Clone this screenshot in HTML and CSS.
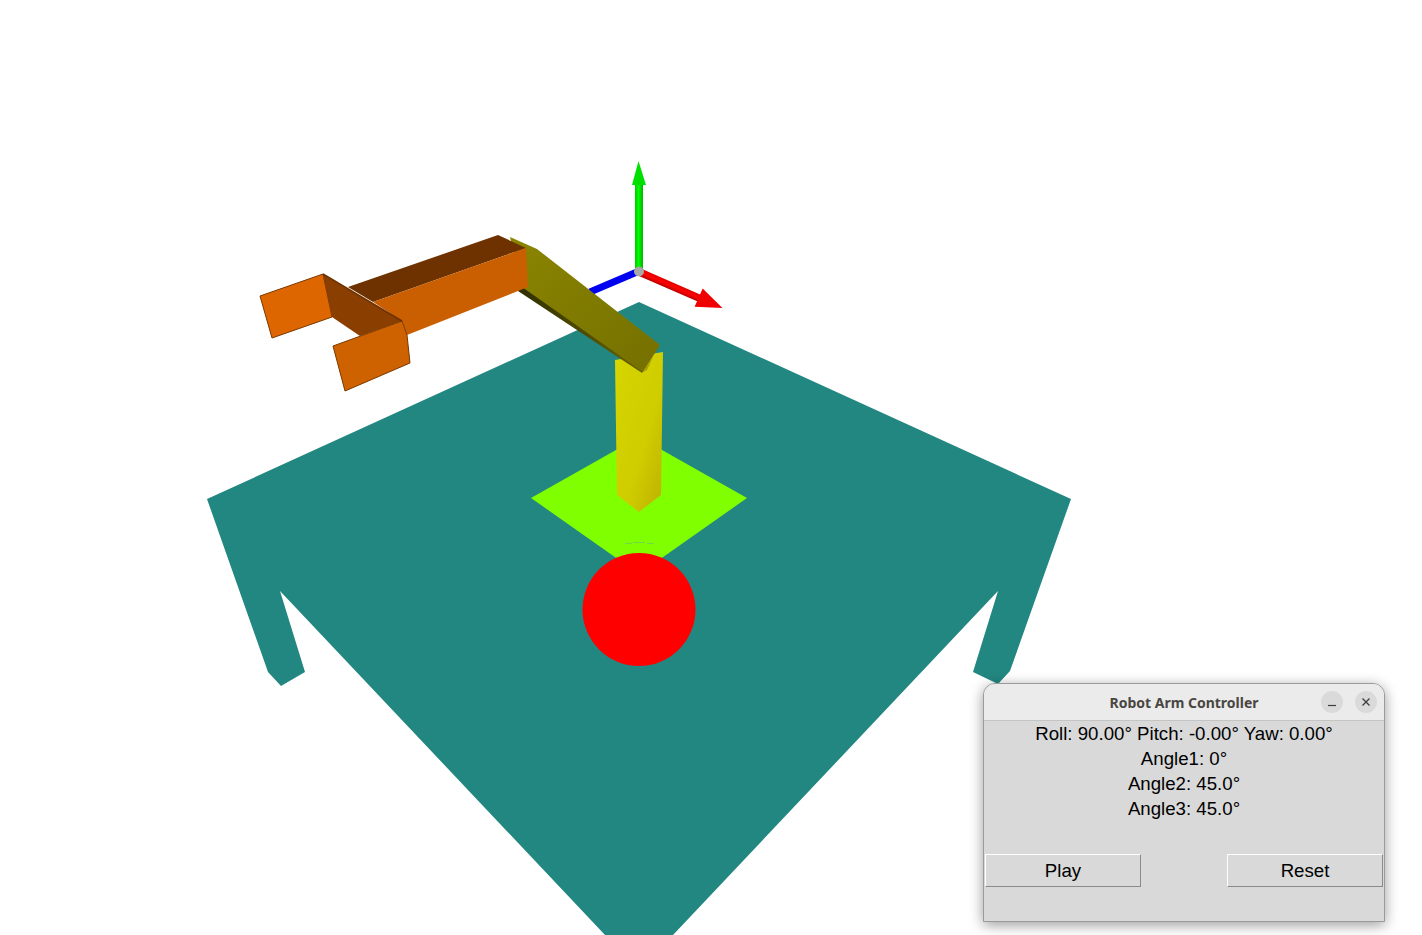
FILE: index.html
```html
<!DOCTYPE html>
<html lang="en">
<head>
  <meta charset="UTF-8" />
  <meta name="viewport" content="width=device-width, initial-scale=1.0"/>
  <title>Robot Arm Controller</title>
  <link rel="stylesheet" href="styles.css">
</head>
<body>
  <div class="scene">
    <svg class="scene-view" width="1422" height="935" viewBox="0 0 1422 935">
      <defs>
        <linearGradient id="pillar" x1="0" y1="0" x2="1" y2="1">
          <stop offset="0" stop-color="#d6d600"/>
          <stop offset="0.6" stop-color="#cfcc00"/>
          <stop offset="1" stop-color="#bdb000"/>
        </linearGradient>
        <linearGradient id="olive" x1="0" y1="0" x2="1" y2="1">
          <stop offset="0" stop-color="#8a8500"/>
          <stop offset="1" stop-color="#757000"/>
        </linearGradient>
        <linearGradient id="under" x1="0" y1="0" x2="1" y2="0">
          <stop offset="0" stop-color="#2e2e00"/>
          <stop offset="1" stop-color="#6a6500"/>
        </linearGradient>
        <linearGradient id="green-shaft" x1="0" y1="0" x2="1" y2="0">
          <stop offset="0" stop-color="#00c800"/>
          <stop offset="0.45" stop-color="#00ff00"/>
          <stop offset="1" stop-color="#00b000"/>
        </linearGradient>
        <linearGradient id="red-shaft" x1="0" y1="0" x2="0" y2="1">
          <stop offset="0" stop-color="#e00000"/>
          <stop offset="0.5" stop-color="#ff0000"/>
          <stop offset="1" stop-color="#b80000"/>
        </linearGradient>
      </defs>

      <!-- table -->
      <polygon fill="#238781" points="639,302 1071,499 1010,671 998,684 973,672 998,591 673,935 605,935 280,591 305,672 281,686 268,672 207,499"/>
      <!-- base plate -->
      <polygon fill="#80ff00" points="639,437 747,498 639,574 531,498"/>
      <path d="M625 543.500h7M633 542.500h12M647 543.500h7" stroke="#72d84a" fill="none"/>
      <circle cx="639" cy="609.500" r="56.500" fill="#ff0000"/>

      <!-- axes -->
      <line x1="590" y1="292" x2="637" y2="272" stroke="#0000f0" stroke-width="7"/>
      <g transform="rotate(23.600 640 272)">
        <rect x="640" y="268.500" width="66" height="7.500" fill="url(#red-shaft)"/>
        <polygon fill="#f00000" points="704,262 730,272 704,282"/>
      </g>
      <rect x="635" y="184" width="8" height="86" fill="url(#green-shaft)"/>
      <polygon fill="#00e000" points="638.500,161 646,185 632,185"/>
      <circle cx="639" cy="271.500" r="5" fill="#a8a8a8"/>

      <!-- pillar -->
      <polygon fill="url(#pillar)" points="615,360 663,352 661,495 639,512 617,495"/>

      <!-- middle link -->
      <polygon fill="url(#under)" points="516,285 522,283 645,368 642,373 518,291"/>
      <polygon fill="url(#olive)" points="510,237 537,249 660,345 643,372 522,287"/>
      <polygon fill="#a6a000" points="643,372 653,357 647,370"/>

      <!-- gripper link -->
      <polygon fill="#6e3200" points="498,235 526,248 373,302 348,287"/>
      <polygon fill="#c95f00" points="526,248 528,287 407,335 402,321 373,302"/>
      <polygon fill="#8a3f00" points="323,274 402,321 360,336 332,317"/>
      <polygon fill="#de6600" stroke="#7a3800" stroke-width="1" points="260,296 323,274 332,317 272,338"/>
      <polygon fill="#cf6200" stroke="#7a3800" stroke-width="1" points="333,346 402,321 407,335 410,363 345,391"/>
      <line x1="323" y1="274" x2="402" y2="321" stroke="#6e3200" stroke-width="1.500"/>
    </svg>

    <div class="window">
      <div class="titlebar">
        <span class="title">Robot Arm Controller</span>
        <div class="title-buttons">
          <span class="title-button">
            <svg width="10" height="10" viewBox="0 0 10 10"><path d="M1 8.500h8" stroke="#3d3d3d" stroke-width="1.200"/></svg>
          </span>
          <span class="title-button">
            <svg width="10" height="10" viewBox="0 0 10 10"><path d="M1.500 1.500l7 7M8.500 1.500l-7 7" stroke="#3d3d3d" stroke-width="1.300"/></svg>
          </span>
        </div>
      </div>
      <div class="panel">
        <div class="readout">Roll: 90.00° Pitch: -0.00° Yaw: 0.00°</div>
        <div class="readout">Angle1: 0°</div>
        <div class="readout">Angle2: 45.0°</div>
        <div class="readout">Angle3: 45.0°</div>
        <div class="button-row">
          <button>Play</button>
          <button>Reset</button>
        </div>
      </div>
    </div>
  </div>
</body>
</html>
```

FILE: styles.css
```css
* { box-sizing: border-box; }

html, body {
  margin: 0;
  height: 100%;
  background-color: #fff;
  overflow: hidden;
}

.scene {
  position: relative;
  width: 1422px;
  height: 935px;
}

.scene-view {
  display: block;
}

.window {
  position: absolute;
  left: 983px;
  top: 683px;
  width: 402px;
  height: 239px;
  display: flex;
  flex-direction: column;
  border: 1px solid #9b9b9b;
  border-radius: 12px 12px 0 0;
  background-color: #d9d9d9;
  box-shadow: 0 3px 14px rgba(0, 0, 0, 0.4);
}

.titlebar {
  position: relative;
  height: 37px;
  display: flex;
  align-items: center;
  justify-content: center;
  background-color: #ebebeb;
  border-bottom: 1px solid #c4c4c4;
  border-radius: 11px 11px 0 0;
}

.title {
  font-family: "Noto Sans", sans-serif;
  font-size: 14px;
  font-weight: 700;
  color: #4a4642;
}

.title-buttons {
  position: absolute;
  right: 7px;
  top: 7px;
  display: flex;
  gap: 12px;
}

.title-button {
  width: 22px;
  height: 22px;
  display: flex;
  align-items: center;
  justify-content: center;
  border-radius: 50%;
  background-color: #dadada;
}

.panel {
  flex: 1;
  display: flex;
  flex-direction: column;
  padding: 0 1px;
  font-family: "Liberation Sans", Arial, sans-serif;
  font-size: 18.67px;
  color: #000;
}

.readout {
  height: 25px;
  line-height: 25px;
  text-align: center;
}

.button-row {
  display: flex;
  justify-content: space-between;
  margin-top: 33px;
}

button {
  width: 156px;
  height: 33px;
  padding: 0;
  font-family: inherit;
  font-size: inherit;
  color: #000;
  background-color: #d9d9d9;
  border: 1px solid;
  border-color: #fff #8a8a8a #8a8a8a #fff;
  border-radius: 0;
}
```
